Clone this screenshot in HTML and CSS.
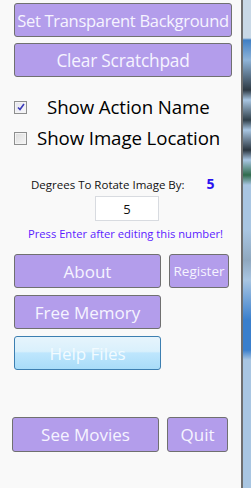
FILE: index.html
```html
<!DOCTYPE html>
<html lang="en">
<head>
    <meta charset="UTF-8">
    <meta name="viewport" content="width=device-width, initial-scale=1.0">
    <title>Scratchpad Options</title>
    <link rel="stylesheet" href="styles.css">
</head>
<body>
    <div class="window">
        <div class="panel">
            <button class="btn wide">Set Transparent Background</button>
            <button class="btn wide second">Clear Scratchpad</button>

            <label class="check first-check">
                <span class="box checked">
                    <svg width="8" height="8" viewBox="0 0 8 8"><path d="M1 4.5 L3 6.5 L7 1" fill="none" stroke="#3a3ab8" stroke-width="1.6"/></svg>
                </span>
                <span class="check-text action">Show Action Name</span>
            </label>
            <label class="check second-check">
                <span class="box"></span>
                <span class="check-text">Show Image Location</span>
            </label>

            <div class="degrees">
                <span class="deg-label">Degrees To Rotate Image By:</span>
                <span class="deg-value">5</span>
            </div>
            <div class="input-row">
                <div class="num-input">5</div>
            </div>
            <div class="hint">Press Enter after editing this number!</div>

            <div class="row about-row">
                <button class="btn mid">About</button>
                <button class="btn small register">Register</button>
            </div>
            <div class="row">
                <button class="btn mid">Free Memory</button>
            </div>
            <div class="row">
                <button class="btn mid help">Help Files</button>
            </div>

            <div class="row bottom-row">
                <button class="btn mid movies">See Movies</button>
                <button class="btn small quit">Quit</button>
            </div>
        </div>
        <div class="strip"></div>
    </div>
</body>
</html>
```

FILE: styles.css
```css
* {
    margin: 0;
    padding: 0;
    box-sizing: border-box;
}
body {
    width: 251px;
    height: 488px;
    overflow: hidden;
    font-family: "Open Sans", "Noto Sans", sans-serif;
}
.window {
    display: flex;
    height: 488px;
}
.panel {
    width: 243px;
    background: #f9f9f9;
    border-right: 2px solid #6f6f6f;
    padding: 3px 0 0 14px;
    display: flex;
    flex-direction: column;
}
.strip {
    flex: 1;
    background: linear-gradient(180deg, #c8d8e6 0, #c8d8e6 38px, #3f7fc4 40px, #8fb4d8 60px, #2e3a44 90px, #a9c6e2 100px, #30404a 120px, #a9c6e2 130px, #2b3640 150px, #a9c6e2 160px, #2f6b4c 175px, #a9c6e2 185px, #a9c6e2 230px, #8fa8bf 260px, #a9c6e2 280px, #3a7fcc 320px, #3a7fcc 350px, #a9c6e2 360px, #a9c6e2 488px);
}
.btn {
    display: flex;
    align-items: center;
    justify-content: center;
    height: 34px;
    flex-shrink: 0;
    background: #b39deb;
    border: 1px solid #707070;
    border-radius: 3px;
    color: #f6f4ff;
    font-family: "Open Sans", "Noto Sans", sans-serif;
    font-size: 17px;
    white-space: nowrap;
}
.wide {
    width: 218px;
    font-size: 16.5px;
    letter-spacing: -0.3px;
}
.second {
    margin-top: 6px;
    font-size: 17.3px;
    letter-spacing: -0.2px;
}
.check {
    display: flex;
    align-items: center;
    height: 22px;
    font-size: 18.7px;
    line-height: 22px;
    letter-spacing: -0.1px;
    color: #000;
    white-space: nowrap;
}
.first-check {
    margin-top: 19px;
}
.second-check {
    margin-top: 9px;
}
.box {
    width: 13px;
    height: 13px;
    flex-shrink: 0;
    border: 1px solid #8e8f8f;
    background: linear-gradient(135deg, #dcdcdc, #f6f6f6);
    display: flex;
    align-items: center;
    justify-content: center;
    box-shadow: inset 0 0 0 1px #f4f4f4;
}
.box.checked {
    background: linear-gradient(135deg, #e4e4ee, #f8f8fb);
}
.check-text {
    margin-left: 10px;
}
.check-text.action {
    margin-left: 20px;
}
.degrees {
    display: flex;
    align-items: baseline;
    height: 16px;
    line-height: 16px;
    margin-top: 27px;
    padding-left: 17px;
    font-size: 11.5px;
    color: #111;
}
.deg-value {
    margin-left: 22px;
    font-size: 14px;
    font-weight: 700;
    color: #2a12f0;
}
.input-row {
    display: flex;
    padding-left: 81px;
    margin-top: 4px;
}
.num-input {
    width: 64px;
    height: 25px;
    background: #fff;
    border: 1px solid #d8dbe0;
    display: flex;
    align-items: center;
    justify-content: center;
    font-size: 13px;
    color: #111;
}
.hint {
    height: 15px;
    line-height: 15px;
    margin-top: 5px;
    padding-left: 14px;
    font-size: 11.2px;
    color: #5b1cff;
}
.row {
    display: flex;
    margin-top: 7px;
}
.about-row {
    margin-top: 13px;
}
.mid {
    width: 147px;
}
.small {
    margin-left: 8px;
}
.register {
    width: 60px;
    font-size: 13.5px;
}
.help {
    border-color: #3c7fb1;
    background: linear-gradient(180deg, #e6f4fc 0, #d9f0fc 45%, #bee6fd 50%, #a8dcf8 100%);
    color: #f2fbff;
}
.bottom-row {
    margin-top: 47px;
    margin-left: -2px;
}
.bottom-row .btn {
    height: 35px;
}
.quit {
    width: 61px;
    margin-left: 8px;
}
```
